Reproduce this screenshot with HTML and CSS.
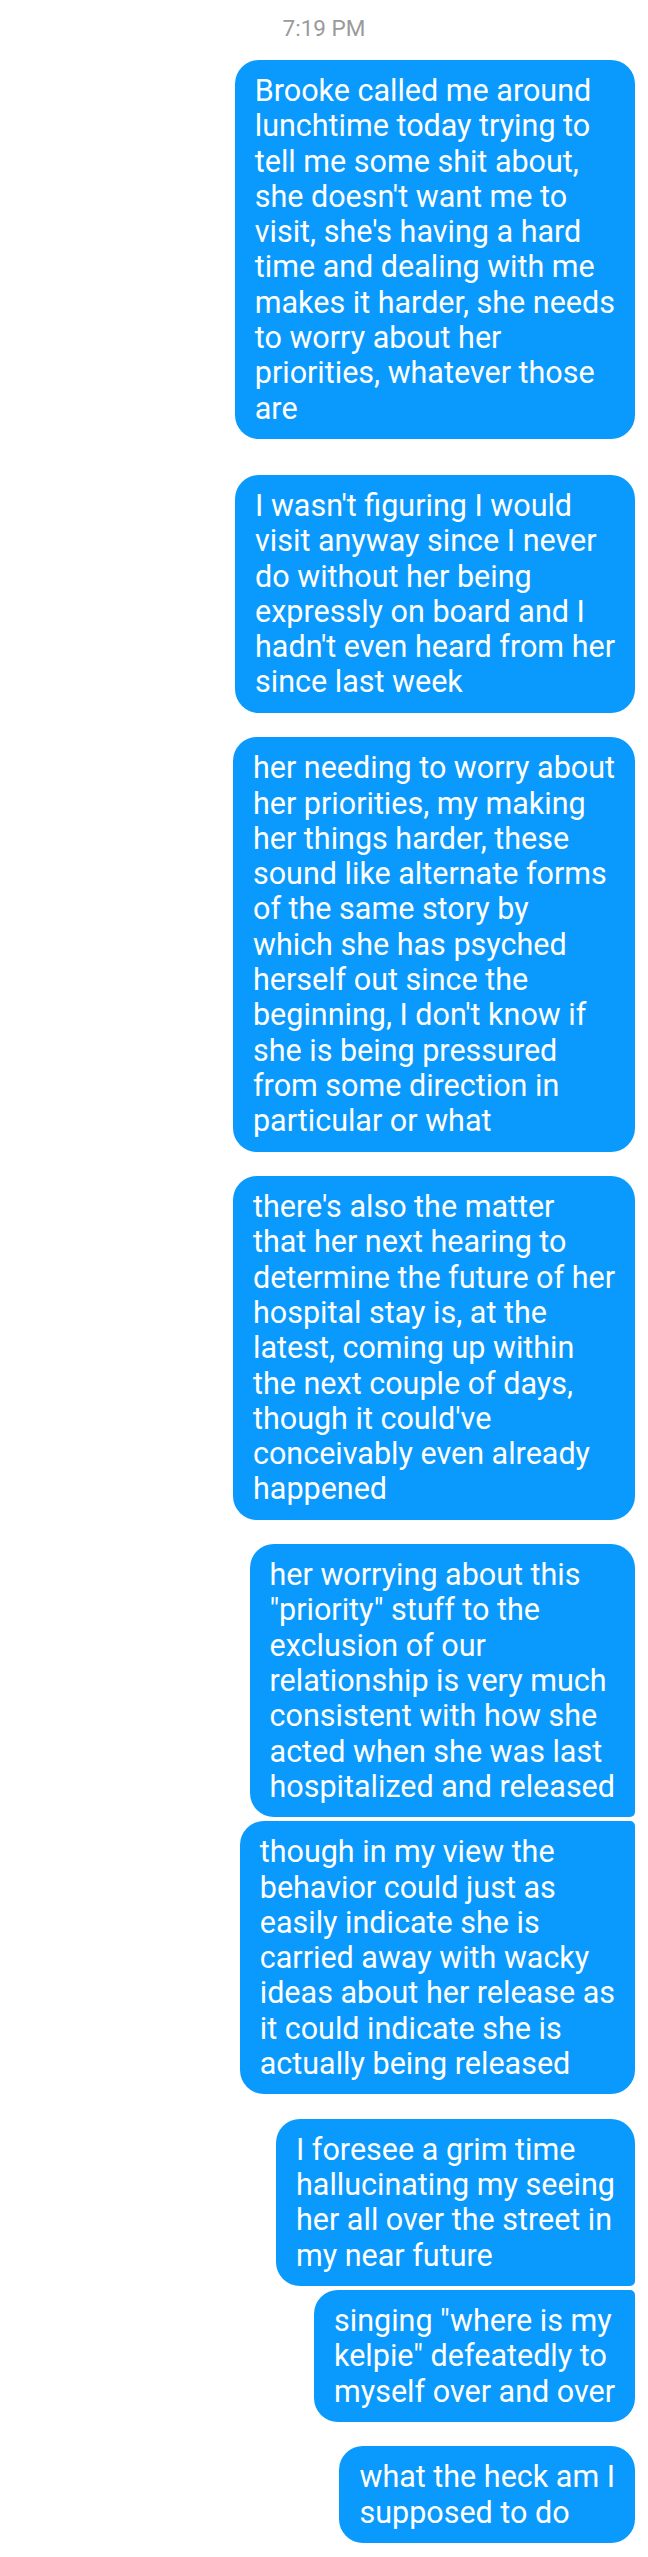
FILE: index.html
```html
<!DOCTYPE html>
<html lang="en">
<head>
<meta charset="utf-8">
<title>Conversation</title>
<link rel="stylesheet" href="styles.css">
</head>
<body>
<main class="thread">
  <div class="timestamp">7:19 PM</div>

  <div class="group group-first">
    <div class="bubble">
      <span class="ln">Brooke called me around</span>
      <span class="ln">lunchtime today trying to</span>
      <span class="ln">tell me some shit about,</span>
      <span class="ln">she doesn't want me to</span>
      <span class="ln">visit, she's having a hard</span>
      <span class="ln">time and dealing with me</span>
      <span class="ln">makes it harder, she needs</span>
      <span class="ln">to worry about her</span>
      <span class="ln">priorities, whatever those</span>
      <span class="ln">are</span>
    </div>
  </div>

  <div class="group group-wide">
    <div class="bubble">
      <span class="ln">I wasn't figuring I would</span>
      <span class="ln">visit anyway since I never</span>
      <span class="ln">do without her being</span>
      <span class="ln">expressly on board and I</span>
      <span class="ln">hadn't even heard from her</span>
      <span class="ln">since last week</span>
    </div>
  </div>

  <div class="group">
    <div class="bubble">
      <span class="ln">her needing to worry about</span>
      <span class="ln">her priorities, my making</span>
      <span class="ln">her things harder, these</span>
      <span class="ln">sound like alternate forms</span>
      <span class="ln">of the same story by</span>
      <span class="ln">which she has psyched</span>
      <span class="ln">herself out since the</span>
      <span class="ln">beginning, I don't know if</span>
      <span class="ln">she is being pressured</span>
      <span class="ln">from some direction in</span>
      <span class="ln">particular or what</span>
    </div>
  </div>

  <div class="group">
    <div class="bubble">
      <span class="ln">there's also the matter</span>
      <span class="ln">that her next hearing to</span>
      <span class="ln">determine the future of her</span>
      <span class="ln">hospital stay is, at the</span>
      <span class="ln">latest, coming up within</span>
      <span class="ln">the next couple of days,</span>
      <span class="ln">though it could've</span>
      <span class="ln">conceivably even already</span>
      <span class="ln">happened</span>
    </div>
  </div>

  <div class="group">
    <div class="bubble">
      <span class="ln">her worrying about this</span>
      <span class="ln">"priority" stuff to the</span>
      <span class="ln">exclusion of our</span>
      <span class="ln">relationship is very much</span>
      <span class="ln">consistent with how she</span>
      <span class="ln">acted when she was last</span>
      <span class="ln">hospitalized and released</span>
    </div>
    <div class="bubble">
      <span class="ln">though in my view the</span>
      <span class="ln">behavior could just as</span>
      <span class="ln">easily indicate she is</span>
      <span class="ln">carried away with wacky</span>
      <span class="ln">ideas about her release as</span>
      <span class="ln">it could indicate she is</span>
      <span class="ln">actually being released</span>
    </div>
  </div>

  <div class="group">
    <div class="bubble">
      <span class="ln">I foresee a grim time</span>
      <span class="ln">hallucinating my seeing</span>
      <span class="ln">her all over the street in</span>
      <span class="ln">my near future</span>
    </div>
    <div class="bubble">
      <span class="ln">singing "where is my</span>
      <span class="ln">kelpie" defeatedly to</span>
      <span class="ln">myself over and over</span>
    </div>
  </div>

  <div class="group">
    <div class="bubble">
      <span class="ln">what the heck am I</span>
      <span class="ln">supposed to do</span>
    </div>
  </div>
</main>
</body>
</html>
```

FILE: styles.css
```css
html, body {
  margin: 0;
  padding: 0;
  background: #ffffff;
}

body {
  font-family: Roboto, "Noto Sans", "Liberation Sans", sans-serif;
  -webkit-font-smoothing: antialiased;
}

.thread {
  display: flex;
  flex-direction: column;
  padding: 15px 13px 14px 13px;
}

.timestamp {
  text-align: center;
  font-size: 22.5px;
  line-height: 26px;
  color: #9a9a9a;
}

.group {
  display: flex;
  flex-direction: column;
  align-items: flex-end;
  gap: 4px;
  margin-top: 24.5px;
}

.group-first {
  margin-top: 19px;
}

.group-wide {
  margin-top: 36px;
}

.bubble {
  background: #0a99fc;
  color: #ffffff;
  font-size: 30.5px;
  line-height: 35.3px;
  padding: 13px 20px;
  border-radius: 24px;
  width: fit-content;
}

.group .bubble:not(:last-child) {
  border-bottom-right-radius: 5px;
}

.group .bubble:not(:first-child) {
  border-top-right-radius: 5px;
}

.ln {
  display: block;
  white-space: nowrap;
}
```
